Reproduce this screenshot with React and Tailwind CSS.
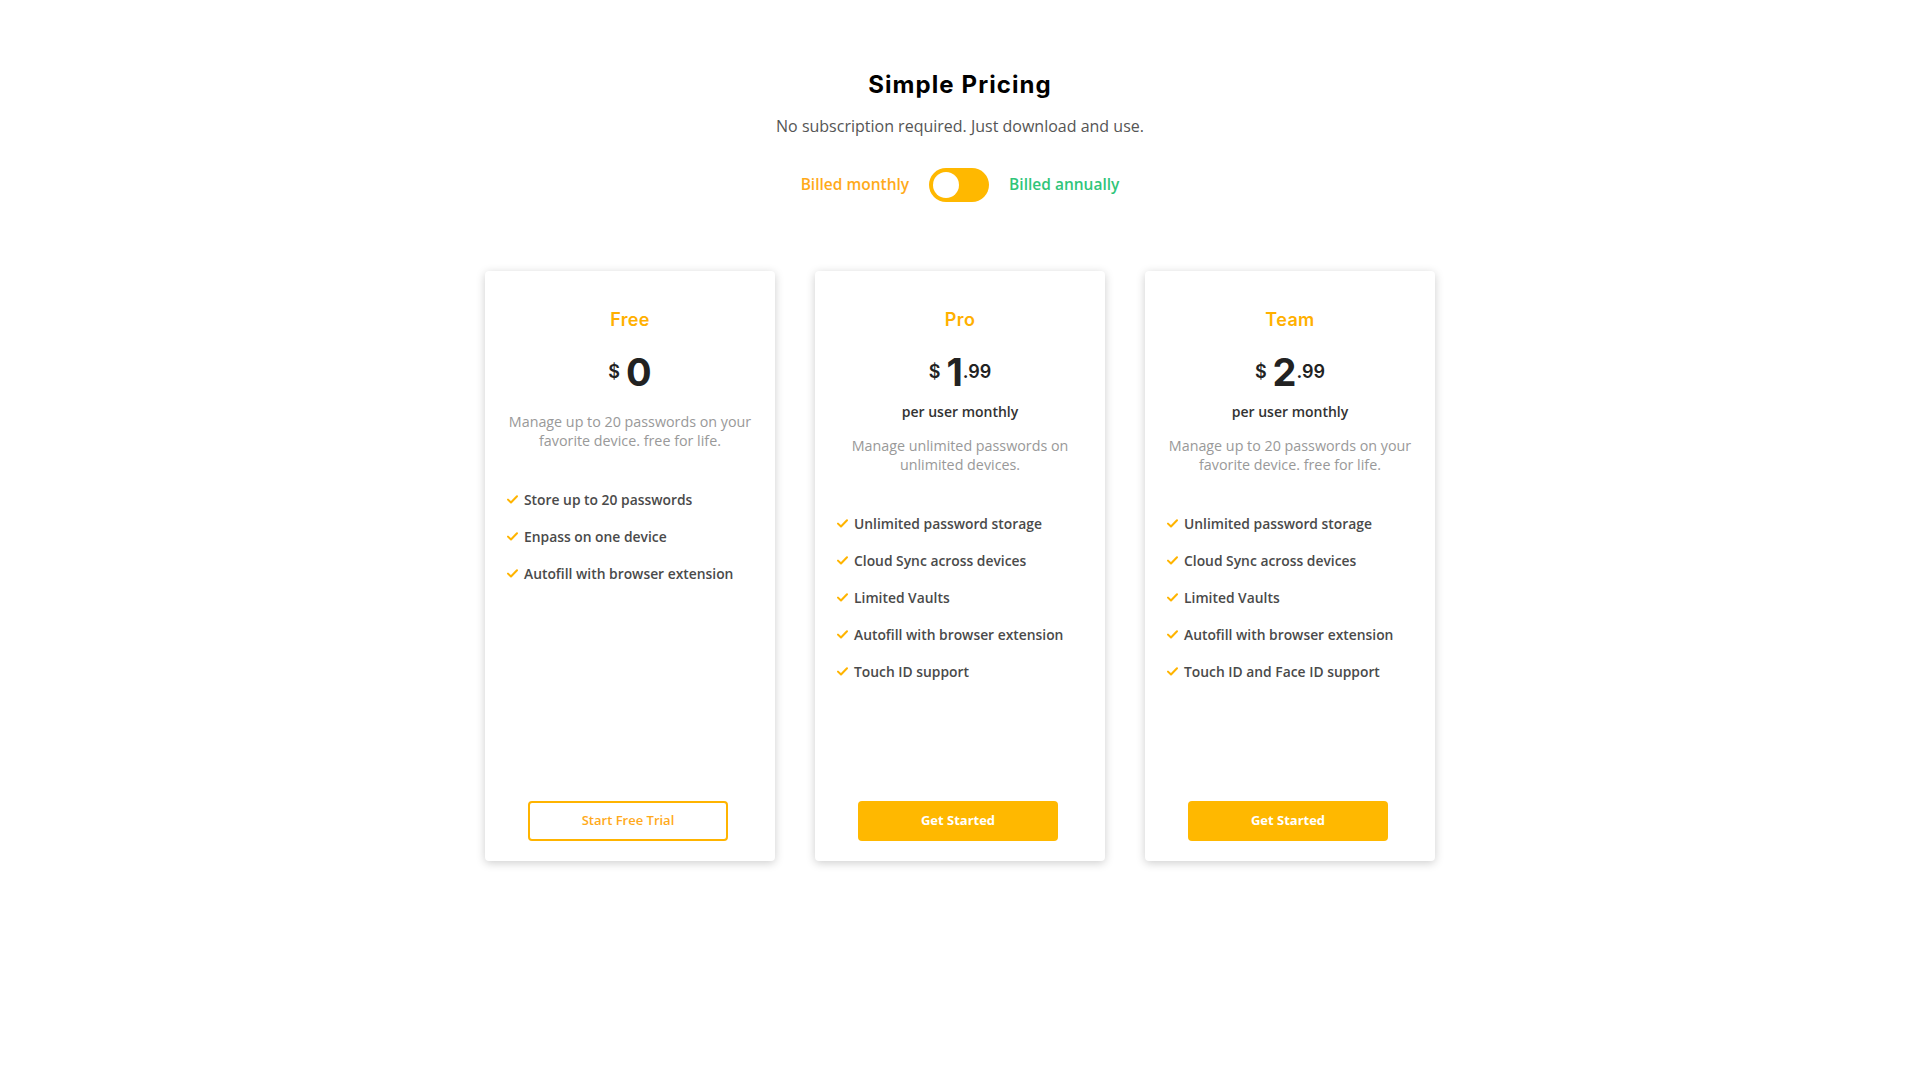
import React from "react";

const head = { fontFamily: "Inter, 'DejaVu Sans', sans-serif" };
const body = { fontFamily: "'Open Sans', 'Liberation Sans', sans-serif" };

function Check() {
  return (
    <svg width="11" height="9" viewBox="0 0 11 9" className="shrink-0">
      <path d="M1 4.6 L4 7.5 L10 1.2" fill="none" stroke="#FFB400" strokeWidth="2" strokeLinecap="round" strokeLinejoin="round" />
    </svg>
  );
}

const plans = [
  {
    name: "Free",
    whole: "0",
    cents: "",
    per: false,
    desc: "Manage up to 20 passwords on your favorite device. free for life.",
    features: ["Store up to 20 passwords", "Enpass on one device", "Autofill with browser extension"],
    cta: "Start Free Trial",
    outline: true,
  },
  {
    name: "Pro",
    whole: "1",
    cents: ".99",
    per: true,
    desc: "Manage unlimited passwords on unlimited devices.",
    features: [
      "Unlimited password storage",
      "Cloud Sync across devices",
      "Limited Vaults",
      "Autofill with browser extension",
      "Touch ID support",
    ],
    cta: "Get Started",
    outline: false,
  },
  {
    name: "Team",
    whole: "2",
    cents: ".99",
    per: true,
    desc: "Manage up to 20 passwords on your favorite device. free for life.",
    features: [
      "Unlimited password storage",
      "Cloud Sync across devices",
      "Limited Vaults",
      "Autofill with browser extension",
      "Touch ID and Face ID support",
    ],
    cta: "Get Started",
    outline: false,
  },
];

function Card({ p }) {
  return (
    <div className="w-[290px] h-[590px] bg-white rounded-[4px] shadow-[0_2px_10px_rgba(0,0,0,0.2)] flex flex-col pt-[37px] pb-[20px] px-[20px]">
      <div style={head} className="text-center text-[18px] leading-[24px] font-semibold tracking-[0.02em] text-[#FFB000]">
        {p.name}
      </div>
      <div style={head} className="mt-[21px] flex justify-center items-start text-[#222]">
        <span className="text-[18px] leading-none font-semibold mt-[10px] mr-[6px]">$</span>
        <span className="text-[38px] leading-none font-bold">{p.whole}</span>
        {p.cents && <span className="text-[18px] leading-none font-semibold mt-[10px]">{p.cents}</span>}
      </div>
      {p.per && (
        <div style={body} className="mt-[11px] text-center text-[14px] leading-[19.6px] font-semibold text-[#333]">
          per user monthly
        </div>
      )}
      <p style={body} className={`${p.per ? "mt-[14px]" : "mt-[21px]"} text-center text-[14.3px] leading-[19px] text-[#999]`}>
        {p.desc}
      </p>
      <ul style={body} className="mt-[39px] flex flex-col gap-4 pl-[2px]">
        {p.features.map((f) => (
          <li key={f} className="flex items-center gap-[6px] text-[13.85px] leading-[21px] font-semibold text-[#4a4a4a]">
            <Check />
            <span>{f}</span>
          </li>
        ))}
      </ul>
      <div className="mt-auto flex justify-center">
        {p.outline ? (
          <button style={body} className="w-[200px] h-[40px] rounded-[4px] border-2 border-[#FFB400] text-[#FFAA1A] text-[13px] font-semibold bg-white mr-[4px]">
            {p.cta}
          </button>
        ) : (
          <button style={body} className="w-[200px] h-[40px] rounded-[4px] bg-[#FFB800] text-white text-[13px] font-bold mr-[4px]">
            {p.cta}
          </button>
        )}
      </div>
    </div>
  );
}

export default function App() {
  return (
    <div className="w-[1920px] h-[1080px] bg-white flex flex-col items-center pt-[69px]">
      <h1 style={head} className="text-[24px] leading-[32px] font-bold text-black tracking-[0.045em]">
        Simple Pricing
      </h1>
      <p style={body} className="mt-[13px] text-[16px] leading-[24px] text-[#555]">
        No subscription required. Just download and use.
      </p>
      <div style={body} className="mt-[30px] flex items-center gap-[20px] text-[15.5px] font-semibold">
        <span className="text-[#FFAA1A]">Billed monthly</span>
        <div className="w-[60px] h-[34px] rounded-full bg-[#FFB800] flex items-center pl-[4px]">
          <div className="w-[26px] h-[26px] rounded-full bg-white" />
        </div>
        <span className="text-[#2FC57A]">Billed annually</span>
      </div>
      <div className="mt-[69px] flex gap-[40px]">
        {plans.map((p) => (
          <Card key={p.name} p={p} />
        ))}
      </div>
    </div>
  );
}
